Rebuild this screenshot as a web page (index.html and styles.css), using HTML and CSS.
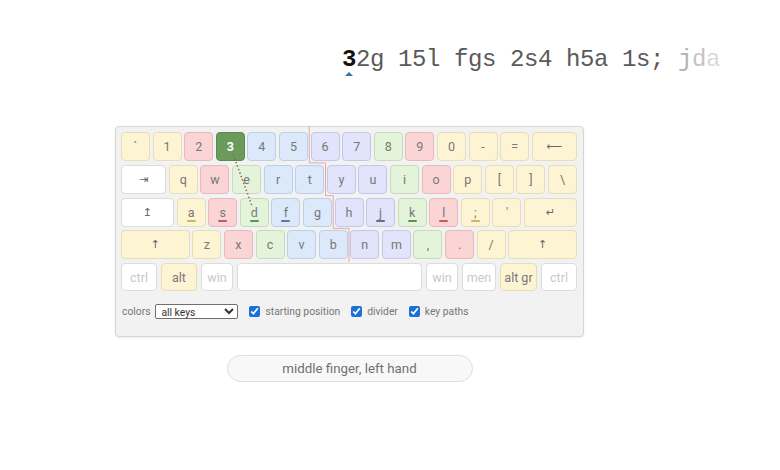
FILE: index.html
```html
<!DOCTYPE html>
<html lang="en">
<head>
<meta charset="utf-8">
<title>Typing trainer</title>
<link rel="stylesheet" href="styles.css">
</head>
<body>
<main class="page">
  <div class="prompt"><span class="cur">3</span>2g 15l fgs 2s4 h5a 1s; <span class="f1">j</span><span class="f2">d</span><span class="f3">a</span></div>
  <section class="trainer">
    <div class="kb">
      <div class="rows">
        <div class="row">
          <div class="k y">`</div><div class="k y">1</div><div class="k r">2</div><div class="k act">3</div><div class="k b">4</div><div class="k b">5</div><div class="k v">6</div><div class="k v">7</div><div class="k g">8</div><div class="k r">9</div><div class="k y">0</div><div class="k y">-</div><div class="k y">=</div><div class="k y grow sym">⟵</div>
        </div>
        <div class="row">
          <div class="k wh grow sym">⇥</div><div class="k y">q</div><div class="k r">w</div><div class="k g">e</div><div class="k b">r</div><div class="k b">t</div><div class="k v">y</div><div class="k v">u</div><div class="k g">i</div><div class="k r">o</div><div class="k y">p</div><div class="k y">[</div><div class="k y">]</div><div class="k y">\</div>
        </div>
        <div class="row">
          <div class="k wh grow sym">↥</div><div class="k y home hy">a</div><div class="k r home hr">s</div><div class="k g home hg">d</div><div class="k b home hb">f</div><div class="k b">g</div><div class="k v">h</div><div class="k v home hv">j</div><div class="k g home hg">k</div><div class="k r home hr">l</div><div class="k y home hy">;</div><div class="k y">'</div><div class="k y grow sym">↵</div>
        </div>
        <div class="row">
          <div class="k y grow sym">↑</div><div class="k y">z</div><div class="k r">x</div><div class="k g">c</div><div class="k b">v</div><div class="k b">b</div><div class="k v">n</div><div class="k v">m</div><div class="k g">,</div><div class="k r">.</div><div class="k y">/</div><div class="k y grow sym">↑</div>
        </div>
        <div class="row row5">
          <div class="k wh mod w36">ctrl</div><div class="k y w36">alt</div><div class="k wh mod w32">win</div><div class="k wh space"></div><div class="k wh mod w32">win</div><div class="k wh mod w34">men</div><div class="k y w37">alt gr</div><div class="k wh mod w36">ctrl</div>
        </div>
      </div>
      <div class="opts">
        <span class="lbl">colors</span>
        <select class="sel"><option>all keys</option></select>
        <label class="chk"><input type="checkbox" checked> starting position</label>
        <label class="chk"><input type="checkbox" checked> divider</label>
        <label class="chk"><input type="checkbox" checked> key paths</label>
      </div>
      <svg class="overlay" width="467" height="209" viewBox="0 0 467 209">
        <path d="M193.3 0 V35.9 H209.5 V68.6 H217.2 V101.4 H233 V135" fill="none" stroke="#e2a9a9" stroke-width="1"/>
        <line x1="117.4" y1="28" x2="136" y2="79" stroke="#9a6446" stroke-width="1.6" stroke-dasharray="1.4 2.3"/>
      </svg>
    </div>
    <div class="hint">middle finger, left hand</div>
  </section>
</main>
</body>
</html>
```

FILE: styles.css
```css
html, body {
  margin: 0;
  background: #fff;
}

body {
  font-family: Roboto, "Noto Sans", sans-serif;
}

.page {
  width: 780px;
  height: 470px;
}

.prompt {
  padding: 46px 0 0 342px;
  font-family: "Liberation Mono", monospace;
  font-size: 24px;
  line-height: 28px;
  letter-spacing: -0.4px;
  color: #5a5a5a;
  white-space: pre;
}

.cur {
  position: relative;
  font-weight: bold;
  color: #111;
}

.cur::after {
  content: "";
  position: absolute;
  left: 50%;
  top: 100%;
  margin-left: -4.2px;
  margin-top: -1px;
  width: 0;
  height: 0;
  border-left: 4px solid transparent;
  border-right: 4px solid transparent;
  border-bottom: 4px solid #2f74ab;
}

.f1 { color: #b3b3b3; }
.f2 { color: #c4c4c4; }
.f3 { color: #dadada; }

.trainer {
  margin: 52px 0 0 115px;
  width: 469px;
  display: flex;
  flex-direction: column;
  align-items: center;
}

.kb {
  position: relative;
  width: 469px;
  height: 211px;
  box-sizing: border-box;
  border: 1px solid #d6d6d6;
  border-radius: 4px;
  background: #f2f2f2;
  padding: 5px 6px 0 5px;
  box-shadow: 0 1px 2px rgba(0, 0, 0, 0.08);
}

.rows {
  display: flex;
  flex-direction: column;
  gap: 3.75px;
}

.row {
  display: flex;
  gap: 2.6px;
}

.k {
  flex: none;
  width: 29px;
  height: 29px;
  box-sizing: border-box;
  border: 1px solid #ddd;
  border-radius: 4px;
  display: flex;
  align-items: center;
  justify-content: center;
  font-size: 12.5px;
  color: #777;
  position: relative;
}

.k.grow {
  flex: 1 1 0;
  width: auto;
}

.sym {
  font-family: "DejaVu Sans", sans-serif;
  font-size: 11px;
  color: #666;
}

.y { background: #fdf4d4; border-color: #e8ddb6; }
.r { background: #fbd5d5; border-color: #e8b9b9; }
.g { background: #e4f4da; border-color: #c6dcb9; }
.b { background: #dce9fa; border-color: #bccfe5; }
.v { background: #e1e4fa; border-color: #c4c8e6; }
.wh { background: #fff; border-color: #dcdcdc; }

.act {
  background: #6a9a5c;
  border-color: #5b8a4e;
  color: #fff;
  font-weight: bold;
}

.home::after {
  content: "";
  position: absolute;
  left: 50%;
  bottom: 4px;
  width: 9px;
  height: 2px;
  margin-left: -4.5px;
  border-radius: 1px;
}

.hy::after { background: #cdb467; }
.hr::after { background: #c85a58; }
.hg::after { background: #62905a; }
.hb::after { background: #61799a; }
.hv::after { background: #6a6d7c; }

.row5 {
  gap: 4px;
}

.row5 .k {
  height: 28px;
}

.mod { color: #c8c8c8; }
.w32 { width: 32px; }
.w34 { width: 34px; }
.w36 { width: 36px; }
.w37 { width: 37px; }
.space { width: 185px; }

.opts {
  display: flex;
  align-items: center;
  margin-top: 13px;
  padding-left: 1px;
  font-size: 10.3px;
  color: #777;
}

.sel {
  margin-left: 5px;
  width: 83px;
  height: 15px;
  padding: 0 0 0 1px;
  font-family: Roboto, sans-serif;
  font-size: 10.3px;
  color: #333;
  border: 1px solid #6f6f6f;
  border-radius: 2px;
  background: #fff;
}

.chk {
  display: flex;
  align-items: center;
  gap: 5px;
  margin-left: 11px;
}

.chk input {
  width: 11px;
  height: 11px;
  margin: 0;
  accent-color: #1a6fd8;
}

.overlay {
  position: absolute;
  left: 0;
  top: 0;
  pointer-events: none;
}

.hint {
  margin-top: 18px;
  width: 246px;
  height: 27px;
  box-sizing: border-box;
  border: 1px solid #dedede;
  border-radius: 14px;
  background: #f8f8f8;
  display: flex;
  align-items: center;
  justify-content: center;
  font-size: 13.3px;
  color: #707070;
}
```
